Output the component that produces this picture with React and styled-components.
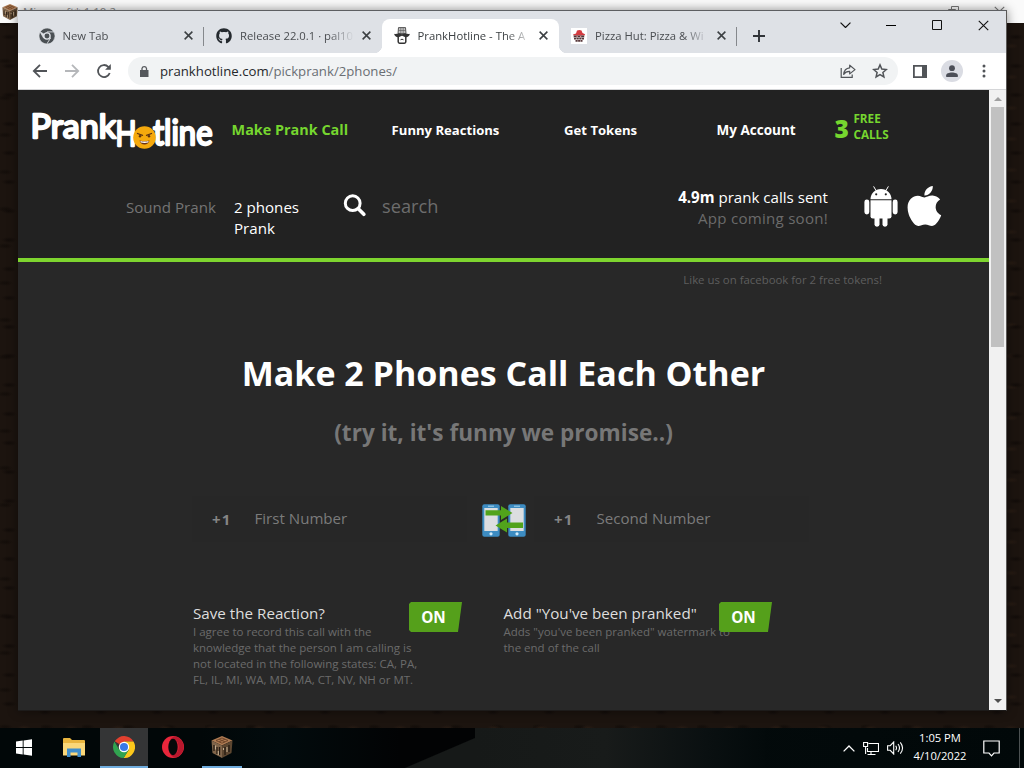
import React from "react";
import styled, { createGlobalStyle, css } from "styled-components";
import { FaGithub, FaApple } from "react-icons/fa";

const Global = createGlobalStyle`
  *, *::before, *::after { box-sizing: border-box; }
  body { margin: 0; overflow: hidden; font-family: "Open Sans", "Noto Sans", sans-serif; }
  h1, h2, h3, p { margin: 0; }
  button { border: 0; padding: 0; margin: 0; background: none; font: inherit; color: inherit; }
  svg { display: block; flex: none; }
`;

/* ---------- desktop ---------- */

const Desktop = styled.div`
  position: relative;
  width: 1024px;
  height: 768px;
  overflow: hidden;
  display: flex;
  flex-direction: column;
  justify-content: space-between;
  background-color: #1c140f;
  background-image:
    radial-gradient(ellipse 8px 3px at 9px 8px, #120c09, transparent),
    radial-gradient(ellipse 7px 3px at 24px 15px, #271b13, transparent),
    radial-gradient(ellipse 8px 3px at 5px 24px, #130d09, transparent),
    radial-gradient(ellipse 7px 3px at 38px 24px, #251912, transparent),
    radial-gradient(ellipse 7px 3px at 45px 10px, #130d0a, transparent);
  background-size: 53px 29px, 47px 31px, 41px 37px, 59px 34px, 56px 27px;
`;

const GameBar = styled.div`
  display: flex;
  align-items: center;
  gap: 5px;
  height: 23px;
  padding-left: 2px;
  background: #fafafa;
  color: #888;
  font-size: 11.5px;
`;

const GameControls = styled.div`
  display: flex;
  gap: 35px;
  margin-left: auto;
  padding-right: 19px;
  color: #777;
`;

const ChromeWindow = styled.main`
  position: absolute;
  left: 18px;
  top: 10px;
  width: 989px;
  height: 701px;
  display: flex;
  flex-direction: column;
  border-top: 1px solid #5d5f62;
  border-right: 1px solid #5a5856;
  border-bottom: 1px solid #1d1b1a;
  background: #fff;
  box-shadow: 0 0 10px rgba(0, 0, 0, 0.45);
`;

/* ---------- tab strip ---------- */

const TabStrip = styled.div`
  display: flex;
  align-items: flex-end;
  height: 42px;
  padding-left: 8.5px;
  background: #dee1e6;
`;

const Tab = styled.div`
  position: relative;
  display: flex;
  align-items: center;
  width: 177.5px;
  height: 34px;
  padding: 0 0 1px 12px;
  color: #4a4d51;
  font-size: 11.3px;
  ${(p) =>
    p.$active &&
    css`
      background: #fff;
      border-radius: 8px 8px 0 0;
      color: #3c4043;
      &::before, &::after {
        content: "";
        position: absolute;
        bottom: 0;
        width: 8px;
        height: 8px;
      }
      &::before { left: -8px; background: radial-gradient(circle at 0 0, transparent 8px, #fff 8.5px); }
      &::after { right: -8px; background: radial-gradient(circle at 100% 0, transparent 8px, #fff 8.5px); }
    `}
  ${(p) =>
    p.$divided &&
    css`
      background: linear-gradient(#85888c, #85888c) right 8px / 1px 19px no-repeat;
    `}
`;

const TabLabel = styled.span`
  width: 114px;
  margin-left: 8px;
  white-space: nowrap;
  mask-image: linear-gradient(90deg, #000 88px, transparent 114px);
`;

const CloseMark = styled.span`
  display: grid;
  place-items: center;
  width: 24px;
  height: 16px;
  color: #3c4043;
`;

const NewTab = styled.button`
  display: grid;
  place-items: center;
  width: 28px;
  height: 34px;
  margin-left: 8px;
  color: #303338;
`;

const WindowControls = styled.div`
  display: flex;
  align-self: flex-start;
  margin-left: auto;
`;

const WindowButton = styled.button`
  display: grid;
  place-items: center;
  width: 46px;
  height: 28px;
  color: #111;
`;

/* ---------- toolbar ---------- */

const Toolbar = styled.div`
  display: flex;
  align-items: center;
  height: 37px;
  padding-left: 6px;
  border-bottom: 1px solid #d5d6d8;
`;

const ToolButton = styled.button`
  display: grid;
  place-items: center;
  width: 32px;
  height: 32px;
  color: ${(p) => (p.$muted ? "#b5b7ba" : "#515458")};
`;

const AddressBar = styled.div`
  display: flex;
  align-items: center;
  width: 770px;
  height: 28px;
  margin: 0 6px 0 8px;
  padding: 0 2px 0 10px;
  border-radius: 14px;
  background: #f1f3f4;
  color: #6a6e73;
  font-size: 13.2px;
`;

const Url = styled.span`
  margin: 0 auto 0 10px;
  white-space: nowrap;
  b { font-weight: 400; color: #26282b; }
`;

const Avatar = styled.span`
  display: grid;
  width: 22px;
  height: 22px;
  border-radius: 50%;
  background: #dadce3;
  place-items: center;
`;

/* ---------- page ---------- */

const Viewport = styled.div`
  flex: 1;
  min-height: 0;
  display: flex;
`;

const Page = styled.div`
  width: 971px;
  background: #282828;
  color: #fff;
  white-space: nowrap;
`;

const SiteHeader = styled.header`
  height: 172px;
  padding-top: 14px;
  background: #222;
  border-bottom: 4px solid #7ed52f;
`;

const NavRow = styled.nav`
  display: grid;
  grid-template-columns: 200px 160px 172.5px 152.5px 117px auto;
  align-items: center;
  height: 52px;
  padding-left: 13.6px;
`;

const NavItem = styled.a`
  color: ${(p) => (p.$active ? "#76d62f" : "#fff")};
  font-size: ${(p) => p.$size || 13.1}px;
  font-weight: 700;
  padding-bottom: ${(p) => (p.$active ? 2 : 0)}px;
`;

const FreeCalls = styled.div`
  display: flex;
  align-items: center;
  gap: 4.5px;
  height: 44px;
  padding-left: 1px;
  color: #76d62f;
  font-weight: 700;
  font-size: 11.7px;
  line-height: 15.5px;
  strong { font-size: 24.5px; line-height: 24px; margin-top: -3px; }
  span { width: 36px; white-space: normal; margin-top: -7px; }
`;

const SubRow = styled.div`
  display: flex;
  align-items: flex-start;
  height: 60px;
  margin-top: 30px;
  padding-left: 108px;
  font-size: 15.1px;
  line-height: 21px;
`;

const ModeLink = styled.a`
  width: ${(p) => p.$width}px;
  margin: 11px ${(p) => p.$gap}px 0 0;
  color: ${(p) => (p.$active ? "#fff" : "#747474")};
  white-space: normal;
`;

const SearchBox = styled.label`
  display: flex;
  gap: 16px;
  width: 299px;
  margin-top: 8px;
  color: #6d6d6d;
  font-size: 18.2px;
  line-height: 24px;
`;

const Stats = styled.div`
  width: 186px;
  margin-top: 1px;
  text-align: right;
  p:last-child { color: #6b6b6b; letter-spacing: 0.25px; }
`;

const Stores = styled.div`
  display: flex;
  align-items: flex-start;
  gap: 6px;
  margin-left: 36px;
`;

const Promo = styled.p`
  height: 36px;
  padding: 9px 107px 0 0;
  text-align: right;
  color: #5e5e5e;
  font-size: 11.4px;
  line-height: 18px;
`;

const Title = styled.h1`
  margin-top: 51px;
  text-align: center;
  font-size: 34px;
  line-height: 48px;
`;

const Subtitle = styled.h2`
  margin-top: 21px;
  text-align: center;
  color: #777;
  font-size: 22.6px;
  line-height: 30px;
`;

const PhoneRow = styled.div`
  display: flex;
  align-items: center;
  height: 46px;
  margin-top: 48px;
  padding-left: 174px;
`;

const NumberField = styled.div`
  display: grid;
  grid-template-columns: 42.5px 1fr;
  align-items: center;
  width: ${(p) => p.$width}px;
  height: 46px;
  padding: 0 0 2px 20px;
  background: #272727;
  color: #7b7b7b;
  font-size: 15.1px;
  b { font-size: 15px; padding-top: 2px; color: #858585; letter-spacing: 1.2px; }
`;

const PhonesSlot = styled.span`
  margin: 0 8.5px 0 14.500px;
  padding-top: 2px;
`;

const OptionsRow = styled.div`
  display: flex;
  margin: 60px 0 0 175px;
`;

const Option = styled.section`
  width: ${(p) => p.$width}px;
`;

const OptionHead = styled.div`
  display: flex;
  justify-content: space-between;
  width: ${(p) => p.$width}px;
  height: 22px;
`;

const OptionTitle = styled.h3`
  color: #dedede;
  font-size: 15.2px;
  font-weight: 400;
  line-height: 22px;
`;

const Toggle = styled.button`
  position: relative;
  width: 53px;
  height: 30px;
  padding: 0 4px 0 0;
  background: #55a01b;
  clip-path: polygon(0 2px, 2px 0, 100% 0, calc(100% - 4px) 100%, 2px 100%, 0 calc(100% - 2px));
  font-size: 15.3px;
  font-weight: 700;
`;

const OptionText = styled.p`
  color: #6b6b6b;
  font-size: 11.5px;
  line-height: 16px;
  white-space: pre-line;
`;

const ScrollTrack = styled.aside`
  flex: 1;
  display: flex;
  flex-direction: column;
  align-items: center;
  padding-bottom: 4px;
  background: #f1f1f1;
`;

const ScrollThumb = styled.div`
  width: 13px;
  height: 240px;
  margin-bottom: auto;
  background: #c1c1c1;
`;

const ScrollArrow = styled.div`
  display: grid;
  place-items: center;
  width: 17px;
  height: ${(p) => (p.$dim ? 17 : 10)}px;
  color: ${(p) => (p.$dim ? "#a0a0a0" : "#505050")};
`;

/* ---------- taskbar ---------- */

const Taskbar = styled.footer`
  display: flex;
  height: 40px;
  color: #fff;
  background:
    linear-gradient(to bottom right, transparent 49%, #161918 51%) 405px 10px / 70px 30px no-repeat,
    linear-gradient(90deg, #161918, #181b1a 45%, #0a1011 80%, #030a0b) 475px 0 / 290px 40px no-repeat,
    linear-gradient(90deg, #010708 0 200px, #020b0d 280px, #020304 400px, #020304 480px, #030a0b 700px, #010809);
`;

const TaskButton = styled.button`
  display: grid;
  place-items: center;
  width: ${(p) => p.$width || 48}px;
  height: 40px;
  margin-right: ${(p) => p.$after || 0}px;
  background: ${(p) => (p.$active ? "#343536" : "transparent")};
  border-bottom: 2px solid ${(p) => (p.$open ? "#6facdd" : "transparent")};
`;

const Tray = styled.div`
  display: flex;
  align-items: center;
  margin-left: auto;
  svg { margin-right: 8px; }
`;

const Clock = styled.div`
  width: 56px;
  margin-right: 15px;
  text-align: center;
  font-size: 11.2px;
  line-height: 18px;
  padding-bottom: 2px;
`;

const ShowDesktop = styled.span`
  width: 5px;
  height: 40px;
  margin-left: 11px;
  border-left: 1px solid #4c5152;
`;

/* ---------- drawings ---------- */

const Cross = ({ size = 9, weight = 1.7 }) => (
  <svg width={size} height={size} viewBox="0 0 10 10" stroke="currentColor" strokeWidth={weight}>
    <path d="M.7.7l8.6 8.6M9.3.7L.7 9.3" />
  </svg>
);

const Chevron = ({ up, size = 12 }) => (
  <svg width={size} height={size / 2 + 1} viewBox="0 0 12 7" fill="none" stroke="currentColor" strokeWidth="1.3">
    <path d={up ? "M.6 6.4L6 1l5.4 5.4" : "M.6.6L6 6 11.4.6"} />
  </svg>
);

const Restore = () => (
  <svg width="11" height="11" viewBox="0 0 11 11" fill="none" stroke="currentColor">
    <path d="M.5 3.5h7v7h-7zM3.5 3.5v-3h7v7h-3" />
  </svg>
);

const ChromeMark = ({ size = 16, mono }) => {
  const c = mono ? ["#4b5054", "#4b5054", "#4b5054"] : ["#e2402f", "#31a350", "#fbc71b"];
  const rim = mono ? "#dee1e6" : "none";
  return (
    <svg width={size} height={size} viewBox="0 0 24 24">
      <g stroke={rim} strokeWidth="1">
        <path fill={c[0]} d="M12 12L1.9 5.7A12 12 0 0 1 22.4 6H12z" />
        <path fill={c[2]} d="M12 12V6h10.4A12 12 0 0 1 11.6 24l5.6-9z" />
        <path fill={c[1]} d="M12 12l5.2 3-5.6 9A12 12 0 0 1 1.6 6l5.2 9z" />
      </g>
      <circle cx="12" cy="12" r="5.7" fill={mono ? "#dee1e6" : "#fff"} />
      <circle cx="12" cy="12" r={mono ? 3.7 : 4.4} fill={mono ? "#4b5054" : "#3979e5"} />
    </svg>
  );
};

const PrankMark = () => (
  <svg width="16" height="17" viewBox="0 0 16 17" fill="#333">
    <path d="M4.500.6h7l.5 6H4z" fill="#c4c4c4" stroke="#444" strokeWidth=".9" />
    <path d="M6.800 1v5M9.200 1v5M4.500 3.500h7" stroke="#555" strokeWidth=".6" />
    <path d="M.1 6.700c1.500 1 3-.2 4.300-.2C6 6.500 7 7 8 7.200 9 7 10 6.500 11.600 6.500c1.300 0 2.800 1.200 4.300.2-.4 2.800-3.200 4.100-5 3.300L8 8.800 5.100 10C3.300 10.800.5 9.500.1 6.700z" />
    <path d="M4.200 9.800v5q0 1.400 1.400 1.400h4.800q1.400 0 1.400-1.400v-5" fill="none" stroke="#333" strokeWidth="1.500" />
    <path d="M6.500 12.800q1.500-1.200 3 0" fill="none" stroke="#333" strokeWidth="1" />
  </svg>
);

const PizzaMark = () => (
  <svg width="16" height="16" viewBox="0 0 16 16">
    <path fill="#fff" d="M0 0h16v16H0z" />
    <path fill="#d33b40" d="M2 6.500l3-1 1-3q2.500-1 4.500 0l1 2.500 2.600 1.300-.6 1.200H2.500z" />
    <path fill="#4b3436" d="M2.700 7.500h10.500v2H2.700z" />
    <path stroke="#573638" strokeWidth="1.600" strokeDasharray="2.200 .4" d="M3 10.800h10M4.500 12.900h7" />
    <path fill="#e38a8c" d="M5.500 8h1.300v1H5.500zM9 8h1.300v1H9z" />
  </svg>
);

const BackArrow = ({ flip }) => (
  <svg width="16" height="14" viewBox="0 0 16 14" fill="none" stroke="currentColor" strokeWidth="1.800">
    <path d={flip ? "M1 7h13M8 .8L14.200 7 8 13.200" : "M15 7H2M8 .8L1.800 7 8 13.200"} />
  </svg>
);

const Reload = () => (
  <svg width="16" height="16" viewBox="0 0 16 16">
    <path d="M13.700 10A6 6 0 1 1 12.300 3.800L14 5.500" fill="none" stroke="currentColor" strokeWidth="1.800" />
    <path d="M14.800 1v5.700H9.100z" fill="currentColor" />
  </svg>
);

const Lock = () => (
  <svg width="12" height="13" viewBox="0 0 12 13">
    <path d="M2 5h8.500v7H2z" fill="#55585c" />
    <path d="M4 5.500V3.400a2.300 2.300 0 0 1 4.500 0v2.100" fill="none" stroke="#55585c" strokeWidth="1.300" />
  </svg>
);

const Share = () => (
  <svg width="16" height="16" viewBox="0 0 16 16" fill="none" stroke="currentColor" strokeWidth="1.200">
    <path d="M1.200 5v9.400h11V11.500" />
    <path d="M9.700 2.200L15 6.600l-5.300 4.300V8.400C7 8.300 5 9.300 3.700 11.400 4 7.600 6 5.200 9.700 4.800z" strokeLinejoin="round" />
  </svg>
);

const Star = () => (
  <svg width="16" height="16" viewBox="0 0 16 16" fill="none" stroke="currentColor" strokeWidth="1.500">
    <path d="M8 1.900l1.800 4.200 4.500.4-3.400 3 1 4.400L8 11.600l-3.900 2.300 1-4.400-3.400-3 4.500-.4z" />
  </svg>
);

const SidePanel = () => (
  <svg width="14" height="13" viewBox="0 0 14 13">
    <path d="M.9.9h12.200v11.200H.9z" fill="none" stroke="#515458" strokeWidth="1.800" />
    <path d="M9 0h5v13H9z" fill="#515458" />
  </svg>
);

const Person = () => (
  <svg width="12" height="13" viewBox="0 0 12 13" fill="#4b4e57">
    <circle cx="6" cy="3.200" r="2.900" />
    <path d="M.2 12V10.300C.2 8.500 3 7.500 6 7.500s5.800 1 5.800 2.800V12z" />
  </svg>
);

const Dots = () => (
  <svg width="4" height="14" viewBox="0 0 4 14" fill="currentColor">
    <circle cx="2" cy="2" r="1.500" /><circle cx="2" cy="7" r="1.500" /><circle cx="2" cy="12" r="1.500" />
  </svg>
);

const Logo = () => (
  <svg width="184" height="46" viewBox="0 0 184 46" overflow="visible">
    <g fill="#fff" stroke="#fff" strokeWidth="2.300" strokeLinejoin="round" fontFamily="Lato, sans-serif" fontWeight="400">
      <text x="-1.500" y="31" fontSize="33.500" textLength="85.500" lengthAdjust="spacingAndGlyphs">Prank</text>
      <text x="83.500" y="38.500" fontSize="34" textLength="21" lengthAdjust="spacingAndGlyphs">H</text>
      <text x="121" y="38" fontSize="34" textLength="59.500" lengthAdjust="spacingAndGlyphs">tline</text>
    </g>
    <circle cx="112.500" cy="30.500" r="11.300" fill="#f5a90d" />
    <path d="M105.500 26.500l5 1.800M119.500 26.500l-5 1.800" stroke="#5d3210" strokeWidth="1.300" strokeLinecap="round" />
    <circle cx="108" cy="29.300" r="1.200" fill="#5d3210" />
    <circle cx="117" cy="29.300" r="1.200" fill="#5d3210" />
    <path d="M107.500 33.500q5 1.500 10 0-1.200 4-5 4T107.500 33.500z" fill="#6c3312" />
    <path d="M108.300 34q4.200 1 8.400 0l-.6 1.600q-3.500.6-7.200 0z" fill="#fff" />
  </svg>
);

const Magnifier = () => (
  <svg width="23" height="23" viewBox="0 0 23 23" fill="none" stroke="#fff">
    <circle cx="9.700" cy="9.200" r="7.400" strokeWidth="3" />
    <path d="M15.300 14.800l5.500 5.500" strokeWidth="3.600" strokeLinecap="round" />
  </svg>
);

const Android = () => (
  <svg width="34" height="41" viewBox="0 0 34 41" fill="#fff">
    <path d="M6.500 13.300C6.500 7.500 11 3 17 3s10.500 4.500 10.500 10.300z" />
    <path d="M12 4.500L9.800.7M22 4.500L24.200.7" stroke="#fff" strokeWidth="1" strokeLinecap="round" />
    <circle cx="12.200" cy="8.300" r="1.100" fill="#222" />
    <circle cx="21.800" cy="8.300" r="1.100" fill="#222" />
    <path d="M6.500 14.300h21v16q0 2.300-2.300 2.300H8.800q-2.300 0-2.300-2.300z" />
    <rect x=".4" y="13.500" width="4.900" height="15" rx="2.400" />
    <rect x="28.700" y="13.500" width="4.900" height="15" rx="2.400" />
    <rect x="10.500" y="26" width="5" height="14.700" rx="2.400" />
    <rect x="18.500" y="26" width="5" height="14.700" rx="2.400" />
  </svg>
);

const PhoneSwap = () => (
  <svg width="44" height="33" viewBox="0 0 44 33">
    {[0, 26].map((x) => (
      <g key={x}>
        <rect x={x + 0.300} y=".3" width="17.400" height="32.400" rx="2" fill="#3d8cc2" />
        <path d={`M${x + 2.300} 4h13.400v23H${x + 2.300}z`} fill="#dcdee0" />
        <path d={`M${x + 6} 2.200h6`} stroke="#a9d8f0" strokeWidth="1" />
        <circle cx={x + 9} cy="29.800" r="1.600" fill="#d4ecfa" />
      </g>
    ))}
    <path d="M3.500 6.200H19V2L30.500 9 19 16v-4.500H3.500z" fill="#51a31b" />
    <path d="M41 18.500H25V14.500L13.500 21.500 25 28.500v-4.500h16z" fill="#51a31b" />
  </svg>
);

const Triangle = ({ up }) => (
  <svg width="8" height="4" viewBox="0 0 8 4" fill="currentColor">
    <path d={up ? "M0 4l4-4 4 4z" : "M0 0h8L4 4z"} />
  </svg>
);

const CraftingTable = ({ size }) => (
  <svg width={size} height={size} viewBox="0 0 22 22">
    <path d="M11 0l10.500 4.500L11 9.500.5 4.500z" fill="#ae7b53" />
    <path d="M.5 4.500L11 9.500V22L1.500 17z" fill="#80654a" />
    <path d="M21.500 4.500L11 9.500V22l9.500-5z" fill="#5c4630" />
    <path d="M5 4.500l6-2.500 6 2.500-6 2.700zM8 3.200l6 2.700M14 3.200L8 5.900" fill="none" stroke="#6c4327" strokeWidth=".9" />
    <path d="M3 9v6M6 11v7M8.500 11v8M14 11v8M18 9v7" stroke="#241a12" strokeWidth="1.300" />
    <path d="M4.500 9.500v4M16 11v5M12.500 12v2M7.300 15v4" stroke="#c4ae90" strokeWidth="1.100" />
  </svg>
);

const WindowsMark = () => (
  <svg width="16" height="17" viewBox="0 0 16 17" fill="#fff">
    <path d="M0 2.500l6.700-.9V8H0zM7.600 1.500L16 .3V8H7.600zM0 9h6.700v6.400L0 14.500zM7.600 9H16v7.700l-8.400-1.200z" />
  </svg>
);

const Folder = () => (
  <svg width="22" height="19" viewBox="0 0 22 19">
    <path d="M0 1q0-1 1-1h6l2 2h12q1 0 1 1v14H0z" fill="#e9b53f" />
    <path d="M0 5h22v12.500H0z" fill="#fad779" />
    <path d="M4 10.500h14V19h-3.500v-4.500h-7V19H4z" fill="#408ecb" />
  </svg>
);

const Opera = () => (
  <svg width="22" height="22" viewBox="0 0 22 22">
    <circle cx="11" cy="11" r="11" fill="#e9263b" />
    <path d="M14 .5a11 11 0 0 1 0 21c-3 .3-5-2-6-4 5 3 8.500-1 8.500-6.500S13 1.500 8 4.500c1-2.200 3-4.400 6-4z" fill="#b8182d" />
    <ellipse cx="11" cy="11" rx="4.700" ry="8.300" fill="#05090a" />
  </svg>
);

const Network = () => (
  <svg width="16" height="15" viewBox="0 0 16 15" fill="none" stroke="#fff" strokeWidth="1.100">
    <path d="M5.500 2.500h10v8h-11V7M8 10.500v3M4.500 13.500h8M.6 1.500h4v4h-4zM2.600 5.500v7.500" />
  </svg>
);

const Volume = () => (
  <svg width="17" height="14" viewBox="0 0 17 14" fill="none" stroke="#fff" strokeWidth="1.100">
    <path d="M.6 4.700h2.600L6.700 1v12L3.200 9.300H.6zM8.700 4.700q1.600 2.300 0 4.600M11 3q3 4 0 8M13.300 1.300q4.500 5.700 0 11.400" />
  </svg>
);

const Notes = () => (
  <svg width="17" height="17" viewBox="0 0 17 17" fill="none" stroke="#fff" strokeWidth="1.200">
    <path d="M.8 1h15.400v12H11l-2.500 2.800L6 13H.8z" />
  </svg>
);

const tabs = [
  { label: "New Tab", icon: <ChromeMark mono />, divided: true },
  { label: "Release 22.0.1 · pal10", icon: <FaGithub size={16} color="#24292e" /> },
  { label: "PrankHotline - The A", icon: <PrankMark />, active: true },
  { label: "Pizza Hut: Pizza & Wi", icon: <PizzaMark />, divided: true },
];

export default function App() {
  return (
    <Desktop>
      <Global />
      <GameBar>
        <CraftingTable size={16} />
        <span>Minecraft* 1.10.2</span>
        <GameControls><Restore /><Cross size={11} weight={1} /></GameControls>
      </GameBar>

      <ChromeWindow>
        <TabStrip>
          {tabs.map((t) => (
            <Tab key={t.label} $active={t.active} $divided={t.divided}>
              {t.icon}
              <TabLabel>{t.label}</TabLabel>
              <CloseMark><Cross /></CloseMark>
            </Tab>
          ))}
          <NewTab aria-label="New tab">
            <svg width="12" height="12" viewBox="0 0 12 12" stroke="currentColor" strokeWidth="1.900"><path d="M6 0v12M0 6h12" /></svg>
          </NewTab>
          <WindowControls>
            <WindowButton aria-label="Search tabs"><Chevron size={11} /></WindowButton>
            <WindowButton aria-label="Minimize">
              <svg width="10" height="1" viewBox="0 0 10 1"><path d="M0 0h10v1H0z" /></svg>
            </WindowButton>
            <WindowButton aria-label="Maximize">
              <svg width="10" height="10" viewBox="0 0 10 10" fill="none" stroke="#111"><path d="M.5.5h9v9h-9z" /></svg>
            </WindowButton>
            <WindowButton aria-label="Close"><Cross size={11} weight={1} /></WindowButton>
          </WindowControls>
        </TabStrip>

        <Toolbar>
          <ToolButton aria-label="Back"><BackArrow /></ToolButton>
          <ToolButton aria-label="Forward" $muted><BackArrow flip /></ToolButton>
          <ToolButton aria-label="Reload"><Reload /></ToolButton>
          <AddressBar>
            <Lock />
            <Url><b>prankhotline.com</b>/pickprank/2phones/</Url>
            <ToolButton aria-label="Share"><Share /></ToolButton>
            <ToolButton aria-label="Bookmark"><Star /></ToolButton>
          </AddressBar>
          <ToolButton aria-label="Side panel"><SidePanel /></ToolButton>
          <ToolButton aria-label="Profile"><Avatar><Person /></Avatar></ToolButton>
          <ToolButton aria-label="Menu"><Dots /></ToolButton>
        </Toolbar>

        <Viewport>
          <Page>
            <SiteHeader>
              <NavRow>
                <Logo />
                <NavItem $active $size={14.4}>Make Prank Call</NavItem>
                <NavItem>Funny Reactions</NavItem>
                <NavItem>Get Tokens</NavItem>
                <NavItem $size={13.5}>My Account</NavItem>
                <FreeCalls><strong>3</strong><span>FREE CALLS</span></FreeCalls>
              </NavRow>
              <SubRow>
                <ModeLink $width={92} $gap={16}>Sound Prank</ModeLink>
                <ModeLink $width={70} $gap={39} $active>2 phones Prank</ModeLink>
                <SearchBox><Magnifier />search</SearchBox>
                <Stats>
                  <p><b>4.9m</b> prank calls sent</p>
                  <p>App coming soon!</p>
                </Stats>
                <Stores>
                  <Android />
                  <FaApple size={40} viewBox="6 32 364 448" />
                </Stores>
              </SubRow>
            </SiteHeader>

            <Promo>Like us on facebook for 2 free tokens!</Promo>
            <Title>Make 2 Phones Call Each Other</Title>
            <Subtitle>(try it, it's funny we promise..)</Subtitle>

            <PhoneRow>
              <NumberField $width={275}><b>+1</b>First Number</NumberField>
              <PhonesSlot><PhoneSwap /></PhonesSlot>
              <NumberField $width={275}><b>+1</b>Second Number</NumberField>
            </PhoneRow>

            <OptionsRow>
              <Option $width={310.500}>
                <OptionHead $width={269}>
                  <OptionTitle>Save the Reaction?</OptionTitle>
                  <Toggle>ON</Toggle>
                </OptionHead>
                <OptionText>{"I agree to record this call with the\nknowledge that the person I am calling is\nnot located in the following states: CA, PA,\nFL, IL, MI, WA, MD, MA, CT, NV, NH or MT."}</OptionText>
              </Option>
              <Option $width={300}>
                <OptionHead $width={268.500}>
                  <OptionTitle>Add "You've been pranked"</OptionTitle>
                  <Toggle>ON</Toggle>
                </OptionHead>
                <OptionText>{"Adds \"you've been pranked\" watermark to\nthe end of the call"}</OptionText>
              </Option>
            </OptionsRow>
          </Page>
          <ScrollTrack>
            <ScrollArrow $dim><Triangle up /></ScrollArrow>
            <ScrollThumb />
            <ScrollArrow><Triangle /></ScrollArrow>
          </ScrollTrack>
        </Viewport>
      </ChromeWindow>

      <Taskbar>
        <TaskButton aria-label="Start"><WindowsMark /></TaskButton>
        <TaskButton $width={52} aria-label="File Explorer"><Folder /></TaskButton>
        <TaskButton $active $open aria-label="Chrome"><ChromeMark size={22} /></TaskButton>
        <TaskButton $width={50} $after={4} aria-label="Opera"><Opera /></TaskButton>
        <TaskButton $width={40} $open aria-label="Minecraft"><CraftingTable size={22} /></TaskButton>
        <Tray>
          <Chevron up />
          <Network />
          <Volume />
          <Clock>1:05 PM<br />4/10/2022</Clock>
          <Notes />
          <ShowDesktop />
        </Tray>
      </Taskbar>
    </Desktop>
  );
}
